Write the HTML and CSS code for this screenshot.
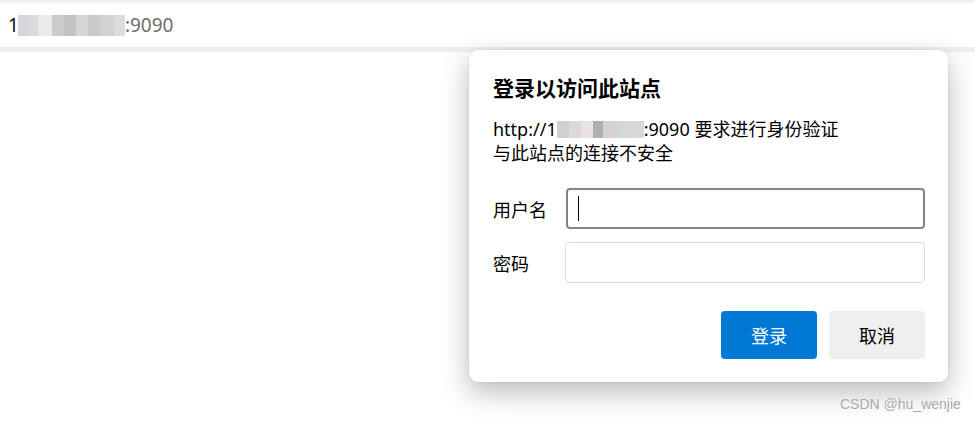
FILE: index.html
```html
<!DOCTYPE html>
<html lang="zh-CN">
<head>
    <meta charset="UTF-8">
    <meta name="viewport" content="width=device-width, initial-scale=1.0">
    <title>登录以访问此站点</title>
    <link rel="stylesheet" href="styles.css">
</head>
<body>
    <div class="address-bar">
        <span class="addr-host">1</span><span class="blur blur-addr"></span><span class="addr-port">:9090</span>
    </div>

    <div class="page"></div>

    <div class="dialog">
        <h1>登录以访问此站点</h1>
        <p class="info">http://1<span class="blur blur-info"></span>:9090 要求进行身份验证<br>与此站点的连接不安全</p>

        <div class="form">
            <label class="field-label">用户名</label>
            <div class="field focused"><span class="caret"></span></div>
            <label class="field-label">密码</label>
            <div class="field"></div>
        </div>

        <div class="actions">
            <button class="btn btn-primary">登录</button>
            <button class="btn btn-secondary">取消</button>
        </div>
    </div>

    <div class="watermark">CSDN @hu_wenjie</div>
</body>
</html>
```

FILE: styles.css
```css
body {
    margin: 0;
    font-family: "Noto Sans", "Noto Sans CJK SC", sans-serif;
    background-color: #fff;
    color: #000;
    height: 423px;
    overflow: hidden;
}
.address-bar {
    height: 44px;
    border-top: 3px solid #f1f1f1;
    border-bottom: 5px solid #efefef;
    display: flex;
    align-items: center;
    padding-left: 8px;
    font-size: 19px;
    box-shadow: 0 1px 0 #f6f6f6;
}
.addr-host {
    color: #111;
}
.addr-port {
    color: #6f6f6f;
}
.blur {
    display: inline-block;
}
.blur-addr {
    width: 107px;
    height: 21px;
    margin-left: -1px;
    background:
        linear-gradient(90deg,
            #d4d6da 0 10px, #dadada 10px 20px, #e9eaec 20px 34px,
            #cbcbcb 34px 46px, #c2c2c2 46px 58px, #d6d6d6 58px 70px,
            #cacacc 70px 82px, #d2d2d2 82px 96px, #dcdcdc 96px 107px);
}
.dialog {
    position: absolute;
    left: 469px;
    top: 50px;
    width: 432px;
    padding: 22px 23px 23px 24px;
    background-color: #fff;
    border-radius: 9px;
    box-shadow: 0 10px 28px rgba(0, 0, 0, 0.28), 0 0 3px rgba(0, 0, 0, 0.08);
}
.dialog h1 {
    margin: 0;
    font-size: 21px;
    font-weight: bold;
    line-height: 32px;
}
.info {
    margin: 13px 0 0;
    font-size: 18px;
    line-height: 24px;
}
.blur-info {
    width: 87px;
    height: 17px;
    vertical-align: -2px;
    background:
        linear-gradient(90deg,
            #d0d0d0 0 12px, #dcd9d6 12px 24px, #e6e3e0 24px 36px,
            #b1afb5 36px 46px, #d7d2cf 46px 60px, #d2d7dc 60px 72px,
            #dbd7d5 72px 87px);
}
.form {
    display: grid;
    grid-template-columns: 72px 1fr;
    row-gap: 13px;
    align-items: center;
    margin-top: 23px;
}
.field-label {
    font-size: 18px;
}
.field {
    height: 39px;
    border: 1px solid #dcdcdc;
    border-radius: 4px;
    display: flex;
    align-items: center;
}
.field.focused {
    height: 37px;
    border: 2px solid #81858b;
    margin-left: 1px;
}
.caret {
    width: 1px;
    height: 25px;
    margin-left: 10px;
    background-color: #000;
}
.actions {
    display: flex;
    justify-content: flex-end;
    gap: 12px;
    margin-top: 28px;
}
.btn {
    width: 96px;
    height: 48px;
    border: none;
    border-radius: 4px;
    font-family: inherit;
    font-size: 18px;
}
.btn-primary {
    background-color: #0078d4;
    color: #fff;
}
.btn-secondary {
    background-color: #efefef;
    color: #000;
}
.watermark {
    position: absolute;
    left: 840px;
    top: 396px;
    font-family: "Liberation Sans", Arial, sans-serif;
    font-size: 14px;
    color: #a8a8a8;
    text-shadow: 0 0 2px #fff;
}
```
